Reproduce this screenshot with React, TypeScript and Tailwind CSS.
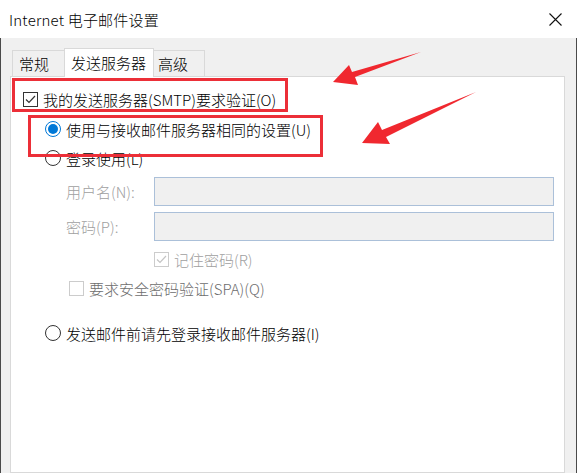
import React from "react";

const font = "font-['Noto_Sans_CJK_SC','Noto_Sans',sans-serif]";

function Check({ disabled, checked }: { disabled?: boolean; checked?: boolean }) {
  return (
    <div
      className={`w-[15px] h-[15px] border flex items-center justify-center bg-white ${
        disabled ? "border-[#cccccc]" : "border-[#333333]"
      }`}
    >
      {checked && (
        <svg width="13" height="13" viewBox="0 0 13 13">
          <path
            d="M2 6.5 L5 9.5 L11 3"
            fill="none"
            stroke={disabled ? "#c4c4c4" : "#333333"}
            strokeWidth="1.2"
          />
        </svg>
      )}
    </div>
  );
}

function Radio({ checked }: { checked?: boolean }) {
  return (
    <div
      className={`w-[16px] h-[16px] rounded-full border flex items-center justify-center bg-white ${
        checked ? "border-[#0078d7]" : "border-[#333333]"
      }`}
    >
      {checked && <div className="w-[10px] h-[10px] rounded-full bg-[#0078d7]" />}
    </div>
  );
}

export default function App() {
  return (
    <div
      className={`relative w-[577px] h-[473px] overflow-hidden bg-[#f0f0f0] text-black text-[15px] font-light ${font}`}
    >
      {/* title bar */}
      <div className="h-[38px] bg-white flex items-center justify-between pl-[9px] pr-[15px]">
        <span className="leading-none tracking-[0.2px]">Internet 电子邮件设置</span>
        <svg width="13" height="13" viewBox="0 0 13 13">
          <path d="M0.5 0.5 L12.5 12.5 M12.5 0.5 L0.5 12.5" stroke="#111" strokeWidth="1.1" />
        </svg>
      </div>

      <div className="flex border-l border-r border-[#4a4a4a] h-[435px]">
        <div className="flex-1 flex flex-col">
          {/* tabs */}
          <div className="flex items-end pl-[11px] mt-[9px] h-[29px]">
            <div className="w-[52px] h-[26px] border-t border-l border-[#d9d9d9] flex items-center pl-[6px] leading-none">
              常规
            </div>
            <div className="relative z-10 w-[90px] h-[29px] -mb-px bg-white border-t border-l border-r border-[#d9d9d9] flex items-center pl-[6px] pb-[2px] leading-none">
              发送服务器
            </div>
            <div className="w-[51px] h-[26px] border-t border-r border-[#d9d9d9] flex items-center pl-[4px] leading-none">
              高级
            </div>
          </div>

          {/* panel */}
          <div className="ml-[9px] w-[555px] flex-1 bg-white border border-[#d9d9d9] flex flex-col leading-none">
            <div className="mt-[10px] h-[24px] flex items-center pl-[12px] gap-[5px]">
              <Check checked />
              <span>我的发送服务器(SMTP)要求验证(O)</span>
            </div>
            <div className="mt-[6px] h-[24px] flex items-center pl-[34px] gap-[5px]">
              <Radio checked />
              <span>使用与接收邮件服务器相同的设置(U)</span>
            </div>
            <div className="mt-[5px] h-[24px] flex items-center pl-[34px] gap-[5px]">
              <Radio />
              <span>登录使用(L)</span>
            </div>
            <div className="mt-[7px] h-[29px] flex items-center">
              <span className="w-[143px] pl-[55px] text-[#a0a0a0]">用户名(N):</span>
              <div className="w-[400px] h-[29px] bg-[#f0f0f0] border border-[#abc0d9]" />
            </div>
            <div className="mt-[6px] h-[29px] flex items-center">
              <span className="w-[143px] pl-[55px] text-[#a0a0a0]">密码(P):</span>
              <div className="w-[400px] h-[29px] bg-[#f0f0f0] border border-[#abc0d9]" />
            </div>
            <div className="mt-[8px] h-[20px] flex items-center pl-[143px] gap-[5px]">
              <Check disabled checked />
              <span className="text-[#a0a0a0]">记住密码(R)</span>
            </div>
            <div className="mt-[9px] h-[20px] flex items-center pl-[58px] gap-[5px]">
              <Check disabled />
              <span className="text-[#6d6d6d]">要求安全密码验证(SPA)(Q)</span>
            </div>
            <div className="mt-[23px] h-[24px] flex items-center pl-[34px] gap-[5px]">
              <Radio />
              <span>发送邮件前请先登录接收邮件服务器(I)</span>
            </div>
          </div>
        </div>
        <div className="w-[12px]" />
      </div>

      {/* annotations */}
      <div className="absolute left-[12px] top-[78px] w-[276px] h-[34px] border-[3px] border-[#ec2f38]" />
      <div className="absolute left-[28px] top-[115px] w-[295px] h-[42px] border-[3px] border-[#ec2f38]" />
      <svg className="absolute left-0 top-0 pointer-events-none" width="577" height="473">
        <polygon fill="#f0282f" points="421,52 355,77 358,85 333,82 349,65 352,72" />
        <polygon fill="#f0282f" points="476,92 386,137 390,144 362,143 378,122 382,130" />
      </svg>
    </div>
  );
}
